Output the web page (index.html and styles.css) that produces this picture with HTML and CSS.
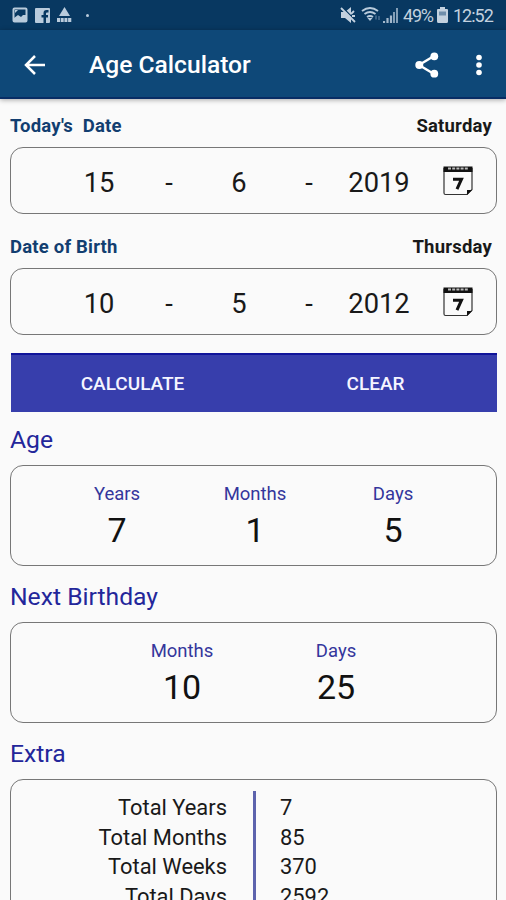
FILE: index.html
```html
<!DOCTYPE html>
<html lang="en">
<head>
<meta charset="utf-8">
<title>Age Calculator</title>
<link rel="stylesheet" href="styles.css">
</head>
<body>
<svg class="defs" width="0" height="0" aria-hidden="true">
  <symbol id="calendar" viewBox="0 0 32 32">
    <path d="M2 3v25q0 1.500 1.500 1.500H25l5-5V3" fill="none" stroke="#333" stroke-width="1.200"/>
    <path d="M1.500 1.500h29v5.500h-29z" fill="#111"/>
    <path d="M6 3.500h20" stroke="#bbb" stroke-width="1.800" stroke-dasharray="3 1.200"/>
    <path d="M25 30v-5h5z" fill="#111"/>
    <path d="M11 14.200h8.500l-4.500 10" fill="none" stroke="#111" stroke-width="3"/>
  </symbol>
</svg>
<div class="status">
  <div class="status-left">
    <svg width="16" height="16" viewBox="0 0 16 16"><rect x="1.500" y="1.500" width="13" height="13" rx="1" fill="none" stroke="#b9cbdc" stroke-width="2"/><path d="M2 11l4-3 3 2 2-2h3v6H2z" fill="#b9cbdc"/><path d="M3 6V3h3z" fill="#b9cbdc"/></svg>
    <svg width="15" height="15" viewBox="0 0 15 15"><path fill="#b9cbdc" fill-rule="evenodd" d="M1 0h13Q15 0 15 1v13q0 1-1 1H11V9.500h2V7h-2V5.500q0-1 1-1h1.500V2H11.500Q8.500 2 8.500 5v2H6.500v2.500h2V15H1Q0 15 0 14V1Q0 0 1 0z"/></svg>
    <svg width="15" height="16" viewBox="0 0 15 16"><path d="M7.500 0l5.500 9h-11z" fill="#b9cbdc"/><path d="M0 13h15" stroke="#b9cbdc" stroke-width="4" stroke-dasharray="3 .7"/></svg>
    <i class="dot"></i>
  </div>
  <div class="status-right">
    <svg width="16" height="16" viewBox="0 0 16 16"><path d="M1 5h4l6-5v16l-6-5H1z" fill="#c3d1df"/><path d="M2 0l14 14" stroke="#083861" stroke-width="1.500"/><path d="M1 1l14 14M11 7l3-3M12 9h3" stroke="#c3d1df" stroke-width="1.800"/></svg>
    <svg class="wifi" width="20" height="16" viewBox="0 0 20 16"><path d="M1 4q8-6 16 0M3.500 7q5.500-4 11 0M6 10q3-2 6 0" fill="none" stroke="#b9cbdc" stroke-width="1.900"/><path d="M6.500 11h5L9 14z" fill="#b9cbdc"/><path d="M15 8.500v4M18 9v4" stroke="#4a6f92" stroke-width="1.500"/></svg>
    <svg class="signal" width="15" height="15" viewBox="0 0 15 15"><path d="M1 15v-2M4.500 15v-5M8 15V7.500" stroke="#a3b8cc" stroke-width="2.200"/><path d="M11 15V4M14 15V0" stroke="#a3b8cc" stroke-width="1.600"/></svg>
    <span class="percent">49%</span>
    <svg class="battery" width="11" height="16" viewBox="0 0 11 16"><path d="M3 0h5v2h2q1 0 1 1v11.500q0 1.500-1.500 1.500h-8Q0 16 0 14.500V3q0-1 1-1h2z" fill="#c3d1df"/><path d="M2 4.500h7v4H2z" fill="#6f8eab"/></svg>
    <span class="clock">12:52</span>
  </div>
</div>
<header class="appbar">
  <svg class="back" width="22" height="20" viewBox="0 0 22 20"><path d="M11 1L2 10l9 9M2 10h19" fill="none" stroke="#fff" stroke-width="2.500"/></svg>
  <h1>Age Calculator</h1>
  <svg class="share" width="24" height="26" viewBox="0 0 24 26"><path d="M19 4L4 13l15 9" fill="none" stroke="#fff" stroke-width="2.400"/><g fill="#fff"><circle cx="19.300" cy="4.300" r="3.900"/><circle cx="4.300" cy="13" r="4"/><circle cx="19.300" cy="21.700" r="3.900"/></g></svg>
  <svg class="more" width="6" height="22" viewBox="0 0 6 22" fill="#fff"><circle cx="3" cy="3.500" r="2.800"/><circle cx="3" cy="11" r="2.800"/><circle cx="3" cy="18.500" r="2.800"/></svg>
</header>
<main>
  <div class="label"><span class="name">Today's&nbsp; Date</span><span class="weekday">Saturday</span></div>
  <div class="card date"><span>15</span><span class="dash">-</span><span>6</span><span class="dash">-</span><span>2019</span><svg width="32" height="32"><use href="#calendar"/></svg></div>
  <div class="label second"><span class="name">Date of Birth</span><span class="weekday">Thursday</span></div>
  <div class="card date"><span>10</span><span class="dash">-</span><span>5</span><span class="dash">-</span><span>2012</span><svg width="32" height="32"><use href="#calendar"/></svg></div>
  <div class="actions"><button>CALCULATE</button><button>CLEAR</button></div>
  <h2 class="first">Age</h2>
  <div class="card result three">
    <div><span class="unit">Years</span><span class="value">7</span></div>
    <div><span class="unit">Months</span><span class="value">1</span></div>
    <div><span class="unit">Days</span><span class="value">5</span></div>
  </div>
  <h2>Next Birthday</h2>
  <div class="card result two">
    <div><span class="unit">Months</span><span class="value">10</span></div>
    <div><span class="unit">Days</span><span class="value">25</span></div>
  </div>
  <h2>Extra</h2>
  <div class="card extra">
    <div class="totals"><span>Total Years</span><span>Total Months</span><span>Total Weeks</span><span>Total Days</span></div>
    <div class="numbers"><span>7</span><span>85</span><span>370</span><span>2592</span></div>
  </div>
</main>
</body>
</html>
```
FILE: styles.css
```css
* { box-sizing: border-box; }
html, body { height: 900px; overflow: hidden; }
body { margin: 0; background: #fafafa; font-family: Roboto, sans-serif; color: #191919; }
.defs { display: none; }
.status { height: 30px; background: #083861; display: flex; justify-content: space-between; padding: 0 13px 0 12px; color: #c3d1df; }
.status-left, .status-right { display: flex; align-items: center; }
.status-left { gap: 7px; }
.dot { width: 3px; height: 3px; border-radius: 50%; background: #b9cbdc; margin-left: 7px; }
.wifi { margin-left: 5px; }
.signal { margin-left: 2px; }
.status-right span { font-size: 18px; line-height: 30px; white-space: nowrap; padding-top: 2px; }
.percent { width: 30px; margin-left: 5px; letter-spacing: -1.200px; }
.battery { margin-left: 4px; }
.clock { width: 40px; margin-left: 5px; letter-spacing: -1px; }
.appbar { height: 69px; background: #0e4878; border-bottom: 2px solid #082d65; box-shadow: 0 1px 5px #0005; display: flex; align-items: center; padding: 2px 24px 0; }
h1 { margin: 1px auto 0 43px; font-size: 24.600px; font-weight: 500; color: #fff; line-height: 30px; }
.share { margin-right: 37px; }
main { padding: 0 9px 0 10px; }
.label { display: flex; justify-content: space-between; padding: 0 5px 0 0; margin: 14px 0 9px; font-size: 18.500px; letter-spacing: .2px; line-height: 27px; height: 25px; font-weight: 700; }
.label.second { margin-top: 20px; }
.name { color: #123e70; }
.card { border: 1px solid #777; border-radius: 13px; }
.date { height: 67px; display: grid; grid-template-columns: repeat(5, 70px) 1fr; padding-left: 53px; align-items: center; justify-items: center; font-size: 27.300px; padding-top: 4px; }
.date svg { margin: -3px 0 0 6px; }
.actions { height: 59px; margin: 18px 0 0 1px; display: grid; grid-template-columns: 1fr 1fr; background: #373eac; border-top: 2px solid #10149a; }
button { border: 0; padding: 0; background: none; font: 500 19px Roboto, sans-serif; color: #f5f5ff; }
h2 { margin: 13px 0 10px; height: 33px; line-height: 36px; font-size: 24.700px; font-weight: 400; color: #23269a; }
h2.first { margin-top: 10px; line-height: 36px; }
.result { height: 101px; padding-top: 16px; display: grid; justify-content: center; }
.result div { display: flex; flex-direction: column; align-items: center; }
.unit { font-size: 18.500px; line-height: 24px; color: #34369c; }
.value { font-size: 34px; line-height: 48px; color: #111; }
.three { grid-template-columns: repeat(3, 138px); padding-left: 3px; }
.two { grid-template-columns: repeat(2, 154px); padding-left: 11px; }
.extra { height: 160px; padding-top: 11px; display: flex; font-size: 21.900px; line-height: 29.600px; }
.totals, .numbers { display: flex; flex-direction: column; padding-top: 2px; }
.totals { width: 245px; padding-right: 26px; align-items: flex-end; border-right: 3px solid #5d63ad; }
.numbers { padding-left: 24px; }
```
